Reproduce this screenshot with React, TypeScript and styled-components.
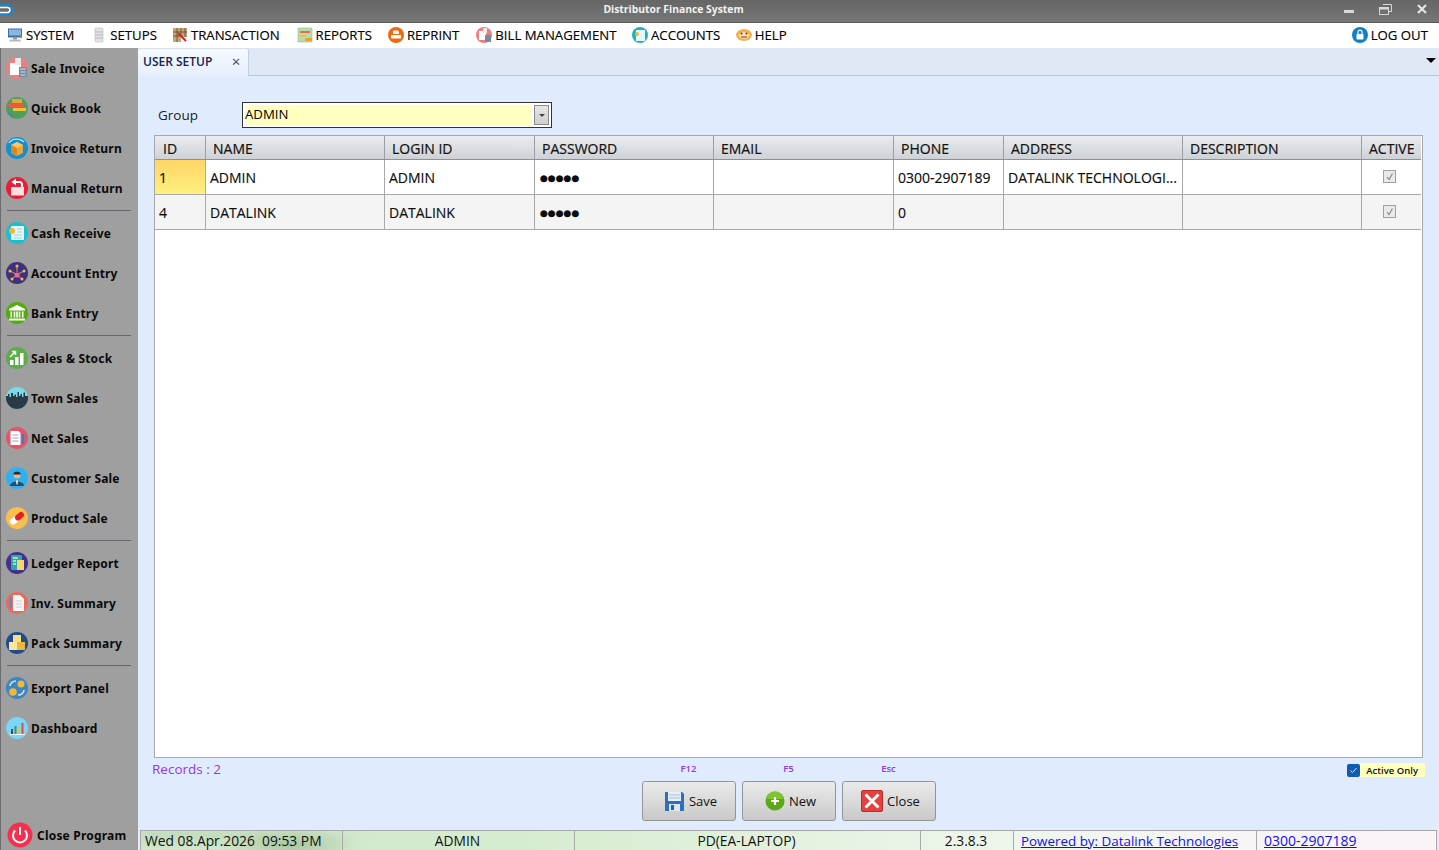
import { ReactNode } from "react";
import styled, { createGlobalStyle } from "styled-components";

const UI_FONT = `"Open Sans", "Noto Sans", "Liberation Sans", sans-serif`;

const GlobalStyle = createGlobalStyle`
  html, body {
    margin: 0;
    padding: 0;
    height: 100%;
    overflow: hidden;
    background: #e0ecfd;
  }
  #root { height: 100%; }
  * { box-sizing: border-box; }
`;

const Page = styled.div`
  width: 1439px;
  height: 850px;
  display: flex;
  flex-direction: column;
  overflow: hidden;
  font-family: ${UI_FONT};
  color: #000;
`;

const TitleBar = styled.div`
  height: 23px;
  flex: none;
  display: flex;
  align-items: center;
  background: linear-gradient(#666 0%, #767676 100%);
  border-bottom: 1px solid #5a5a5a;
`;

const TitleLogo = styled.svg`
  flex: none;
  margin-bottom: 3px;
`;

const TitleText = styled.div`
  flex: 1;
  text-align: center;
  padding-right: 13px;
  font-size: 10.35px;
  font-weight: 700;
  color: #f2f2f2;
  margin-bottom: 4px;
`;

const WindowButtons = styled.div`
  display: flex;
  align-items: center;
  gap: 25px;
  padding-right: 12px;
  margin-bottom: 4px;
`;

const MenuBar = styled.div`
  height: 25px;
  flex: none;
  display: flex;
  align-items: center;
  background: #fff;
  padding: 0 11px 2px 7px;
`;

const MenuItem = styled.div<{ $gap: number }>`
  display: flex;
  align-items: center;
  gap: 3px;
  font-size: 13.2px;
  -webkit-text-stroke: 0.15px #000;
  margin-right: ${({ $gap }) => $gap}px;
  white-space: nowrap;
`;

const MenuSpacer = styled.div`
  flex: 1;
`;

const Body = styled.div`
  flex: 1;
  min-height: 0;
  display: flex;
`;

const Sidebar = styled.aside`
  width: 138px;
  flex: none;
  display: flex;
  flex-direction: column;
  background: #9f9f9f;
  border-left: 1px solid #6c6c70;
`;

const SideItem = styled.div`
  height: 40px;
  flex: none;
  display: flex;
  align-items: center;
  gap: 2px;
  padding-left: 4px;
  font-family: "Noto Sans", "DejaVu Sans", sans-serif;
  font-size: 12px;
  font-weight: 700;
  letter-spacing: 0.2px;
  color: #0a0a0a;
  white-space: nowrap;
`;

const SideDivider = styled.div`
  height: 5px;
  flex: none;
  padding: 2px 7px 2px 6px;

  &::before {
    content: "";
    display: block;
    height: 1px;
    background: #66666a;
  }
`;

const SideFill = styled.div`
  flex: 1;
`;

const SideClose = styled(SideItem)`
  height: 30px;
  gap: 4px;
  padding-left: 6px;
`;

const DiscSvg = styled.svg`
  flex: none;
`;

const Main = styled.main`
  flex: 1;
  min-width: 0;
  display: flex;
  flex-direction: column;
  background: #e0ecfd;
`;

const TabStrip = styled.div`
  height: 28px;
  flex: none;
  display: flex;
  align-items: flex-end;
  justify-content: space-between;
  background: #dfe8f5;
  border-bottom: 1px solid #b9c6da;
`;

const Tab = styled.div`
  width: 111px;
  height: 28px;
  margin-bottom: -1px;
  display: flex;
  align-items: center;
  justify-content: space-between;
  padding: 0 4px 3px 5px;
  background: linear-gradient(#f6f9fe, #e6effd);
  border-right: 1px solid #c2cfe2;
  border-top: 1px solid #d5dfee;
  border-radius: 3px 3px 0 0;
  font-size: 12px;
  font-weight: 600;
  color: #12224f;
`;

const TabClose = styled.span`
  width: 16px;
  text-align: center;
  font-size: 15px;
  line-height: 15px;
  font-weight: 400;
  color: #33476f;
`;

const TabArrow = styled.span`
  width: 0;
  height: 0;
  margin: 0 3px 12px 0;
  border-left: 5px solid transparent;
  border-right: 5px solid transparent;
  border-top: 5px solid #000;
`;

const Content = styled.div`
  flex: 1;
  min-height: 0;
  display: flex;
  flex-direction: column;
  padding: 26px 16px 0;
`;

const GroupRow = styled.div`
  height: 26px;
  flex: none;
  display: flex;
  align-items: center;
  padding-left: 4px;
  font-size: 13.5px;
  color: #1c1c1c;
`;

const GroupLabel = styled.span`
  width: 84px;
`;

const Combo = styled.div`
  width: 310px;
  height: 26px;
  display: flex;
  align-items: stretch;
  gap: 2px;
  padding: 2px;
  background: #fff;
  border: 1px solid #333;
`;

const ComboValue = styled.div`
  flex: 1;
  display: flex;
  align-items: center;
  padding: 0 0 2px 0;
  background: #ffffc0;
  font-size: 13.2px;
  color: #000;
`;

const ComboButton = styled.div`
  width: 15px;
  display: flex;
  align-items: center;
  justify-content: center;
  background: linear-gradient(#e6e6e6, #cfcfcf);
  border: 1px solid #8a8a8a;

  &::after {
    content: "";
    border-left: 3px solid transparent;
    border-right: 3px solid transparent;
    border-top: 3px solid #444;
  }
`;

const Grid = styled.div`
  flex: 1;
  min-height: 0;
  margin-top: 7px;
  background: #fff;
  border: 1px solid #a6a8ac;
  padding-right: 1px;
`;

const Row = styled.div<{ $alt?: boolean }>`
  display: grid;
  grid-template-columns: 51px 179px 150px 179px 180px 110px 179px 179px 59px;
  height: 35px;
  background: ${({ $alt }) => ($alt ? "#f4f4f4" : "#fff")};
  border-bottom: 1px solid #a9a9a9;
`;

const HeadRow = styled(Row)`
  height: 24px;
  background: linear-gradient(#eaecef, #ced2d7);
  border-bottom: 1px solid #8f9196;
`;

const HeadCell = styled.div`
  display: flex;
  align-items: flex-end;
  padding: 0 0 1px 7px;
  border-right: 1px solid #9c9ea3;
  font-size: 14px;
  font-weight: 500;
  -webkit-text-stroke: 0.2px #14110c;
  color: #14110c;
  white-space: nowrap;

  &:first-child {
    padding-left: 8px;
  }

  &:last-child {
    border-right: 0;
  }
`;

const Cell = styled.div<{ $current?: boolean }>`
  display: flex;
  align-items: center;
  padding-left: 4px;
  border-right: 1px solid #a9a9a9;
  font-size: 14px;
  font-weight: 500;
  -webkit-text-stroke: 0.15px #0c0c0c;
  color: #0c0c0c;
  white-space: nowrap;
  overflow: hidden;
  background: ${({ $current }) =>
    $current ? "linear-gradient(#ffd566, #fff080)" : "transparent"};

  &:last-child {
    border-right: 0;
    justify-content: center;
    padding: 0 4px 1px 0;
  }
`;

const Bullets = styled.span`
  font-family: "DejaVu Sans", sans-serif;
  font-size: 9px;
  padding: 2px 0 0 1px;
`;

const Tick = styled.span`
  width: 13px;
  height: 13px;
  display: flex;
  border: 1px solid #a0a0a0;
  background: #e9e9e9;
`;

const Footer = styled.div`
  height: 70px;
  flex: none;
  display: grid;
  grid-template-columns: 1fr auto 1fr;
  padding: 2px 0 0;
  margin-right: -2px;
`;

const Records = styled.div`
  font-size: 13.5px;
  font-weight: 500;
  line-height: 17px;
  color: #9337e6;
  margin: 1px 0 0 -2px;
`;

const ButtonBar = styled.div`
  display: flex;
  gap: 6px;
  margin-left: -2px;
`;

const ButtonSlot = styled.div`
  width: 94px;
  display: flex;
  flex-direction: column;
  align-items: center;
`;

const Hotkey = styled.div`
  height: 21px;
  padding-top: 2px;
  font-size: 9.5px;
  font-weight: 600;
  color: #9337e6;
`;

const Button = styled.div`
  width: 94px;
  height: 40px;
  display: flex;
  align-items: center;
  justify-content: center;
  gap: 4px;
  padding-left: 4px;
  background: linear-gradient(#ebebeb, #c9c9c9);
  border: 1px solid #959595;
  border-radius: 3px;
  font-size: 13px;
  color: #111;
`;

const ActiveSlot = styled.div`
  justify-self: end;
  height: 14px;
  margin-top: 3px;
  display: flex;
  align-items: center;
  gap: 6px;
  padding-right: 7px;
  background: linear-gradient(to right, transparent 0 12px, #ffffc0 12px);
  font-size: 9.5px;
  font-weight: 600;
  color: #111;
`;

const ActiveBox = styled.span`
  width: 13px;
  height: 13px;
  display: flex;
  border-radius: 2px;
  background: #0f5cb4;
`;

const StatusBar = styled.div`
  height: 20px;
  flex: none;
  margin: 2px 2px 0 2px;
  display: grid;
  grid-template-columns: 202px 232px 346px 93px 243px 1fr;
  border: 1px solid #a8a8a8;
  border-bottom: 0;
  background:
    radial-gradient(ellipse 70px 18px at 150px 14px, #a9c6a2, transparent),
    radial-gradient(ellipse 200px 14px at 40px 4px, #c3dcbc, transparent),
    linear-gradient(to right, #cfe6cb 0%, #d6ecd0 30%, #e6f3e2 55%, #f0f6ef 70%, #f8f4f6 85%, #faf3f8 100%);
  font-size: 13.8px;
  line-height: 20px;
  color: #111;
  overflow: hidden;
`;

const StatusCell = styled.div<{ $inset?: number }>`
  padding: ${({ $inset }) => ($inset ? `0 0 0 ${$inset}px` : "0 2px 0 0")};
  text-align: ${({ $inset }) => ($inset ? "left" : "center")};
  border-right: 1px solid #a8a8a8;
  white-space: pre;

  &:last-child {
    border-right: 0;
  }
`;

const StatusLink = styled.span<{ $size: number }>`
  font-size: ${({ $size }) => $size}px;
  color: #1010ee;
  text-decoration: underline;
`;

// round sidebar icon, 24px box with a coloured disc
const Disc = ({ bg, children }: { bg: string; children: ReactNode }) => (
  <DiscSvg width="24" height="24" viewBox="0 0 24 24">
    <circle cx="12" cy="12" r="11" fill={bg} />
    {children}
  </DiscSvg>
);

const Glyph = ({ children }: { children: ReactNode }) => (
  <DiscSvg width="16" height="16" viewBox="0 0 16 16">
    {children}
  </DiscSvg>
);

const sideIcons: Record<string, ReactNode> = {
  "Sale Invoice": (
    <Disc bg="#ee7f80">
      <path d="M5 7h9l2 2v10H5z" fill="#fff" />
      <path d="M10 2h6v7h-6z" fill="#e9e9e9" />
      <rect x="14" y="11" width="8" height="10" fill="#7b8aa0" />
      <path d="M15 13h6M15.5 16h5M15.5 19h5" stroke="#d5dde6" strokeWidth="1.2" />
    </Disc>
  ),
  "Quick Book": (
    <Disc bg="#4f9f5b">
      <path d="M7 3h10v4H7z" fill="#e6a437" />
      <path d="M3 8h15v3H3z" fill="#ea5a4b" />
      <path d="M8 12h13v3H8z" fill="#f0c33c" />
      <path d="M2 15a10 10 0 0 0 8 6z" fill="#3f7fc0" />
    </Disc>
  ),
  "Invoice Return": (
    <Disc bg="#0f8fd6">
      <path d="M6 9l6-3 6 3v8l-6 3-6-3z" fill="#eda537" />
      <path d="M6 9l6 3 6-3-6-3z" fill="#f7c768" />
      <path d="M12 12v8l-6-3V9z" fill="#d88a20" />
      <path d="M4 7c3-5 11-5 15-1" stroke="#bfe6fa" strokeWidth="1.3" fill="none" />
    </Disc>
  ),
  "Manual Return": (
    <Disc bg="#e51f36">
      <rect x="6" y="11" width="13" height="8.5" rx="0.5" fill="#fbdfe2" />
      <path d="M17 11V8.5a2.5 2.5 0 0 0-2.5-2.5H10" stroke="#fff" strokeWidth="2.2" fill="none" />
      <path d="M11 2.5L6.5 6l4.5 3.5z" fill="#fff" />
    </Disc>
  ),
  "Cash Receive": (
    <Disc bg="#19bfcf">
      <rect x="6" y="5" width="13" height="14" rx="1" fill="#e5f6f8" />
      <path d="M12 8h5M12 11h5M9 14h8M9 17h8" stroke="#a9cfd8" strokeWidth="1" />
      <circle cx="7" cy="10" r="3" fill="#f2b63b" />
    </Disc>
  ),
  "Account Entry": (
    <Disc bg="#3f2f80">
      <circle cx="12" cy="14" r="2.6" fill="#ea6a8c" />
      <path d="M12 5v6M5 10l5 2.5M19 10l-5 2.5M7 18l3-2.5M17 18l-3-2.5" stroke="#f0c040" strokeWidth="0.8" />
      <circle cx="12" cy="5" r="1.5" fill="#f0c040" />
      <circle cx="5" cy="10" r="1.5" fill="#f0c040" />
      <circle cx="19" cy="10" r="1.5" fill="#f0c040" />
      <circle cx="7" cy="18" r="1.5" fill="#f0c040" />
      <circle cx="17" cy="18" r="1.5" fill="#f0c040" />
    </Disc>
  ),
  "Bank Entry": (
    <Disc bg="#53ac0c">
      <path d="M12 4l8 4v1.5H4V8z" fill="#fff" />
      <path d="M5.5 10.5h1.6v6H5.5zM8.7 10.5h1.6v6H8.7zM13.7 10.5h1.6v6h-1.6zM16.9 10.5h1.6v6h-1.6zM11.2 10.5h1.6v6h-1.6z" fill="#fff" />
      <path d="M4 17.5h16v2H4z" fill="#fff" />
    </Disc>
  ),
  "Sales & Stock": (
    <Disc bg="#5fac4a">
      <rect x="5" y="14" width="3.5" height="5" fill="#fff" />
      <rect x="10" y="11" width="3.5" height="8" fill="#fff" />
      <rect x="15" y="7" width="3.5" height="12" fill="#fff" />
      <path d="M5 11l5-5M7 5.5h3.5V9" stroke="#fff" strokeWidth="1.5" fill="none" />
    </Disc>
  ),
  "Town Sales": (
    <Disc bg="#78dbe9">
      <path d="M1 12V10h2V8h1.5v3H6V7h2v3h1.5V8.5H11V11h1.5V6H14v4h1.5V8H17v3h1.5V6.5H20V10h3v2a11 11 0 0 1-22 0z" fill="#2b3a47" />
    </Disc>
  ),
  "Net Sales": (
    <Disc bg="#e4556c">
      <path d="M5.5 5h8l2 2v12h-10z" fill="#fff" />
      <path d="M7.5 9h6M7.5 12h6M7.5 15h6" stroke="#8fa8c4" strokeWidth="1" />
      <rect x="17" y="8" width="2.2" height="10" fill="#3d7ec0" />
    </Disc>
  ),
  "Customer Sale": (
    <Disc bg="#2fb0f2">
      <circle cx="12" cy="9" r="3.6" fill="#e9b48a" />
      <path d="M8.2 8.5c0-4 7.6-4 7.6 0z" fill="#2b2b2b" />
      <path d="M5 20c0-6 14-6 14 0z" fill="#34495e" />
      <path d="M11 14.5h2l-.5 4h-1z" fill="#fff" />
    </Disc>
  ),
  "Product Sale": (
    <Disc bg="#f9bf4f">
      <path d="M8 15.5l4-3" stroke="#fff" strokeWidth="6" strokeLinecap="round" />
      <path d="M13 11.5l3-2.5" stroke="#e81e25" strokeWidth="6" strokeLinecap="round" />
    </Disc>
  ),
  "Ledger Report": (
    <Disc bg="#46318a">
      <rect x="6" y="4" width="11" height="15" rx="1" fill="#29a6b8" />
      <rect x="12" y="9" width="7" height="10" fill="#f5d76e" />
      <path d="M8 7h5M8 10h3M8 13h3" stroke="#e8f27a" strokeWidth="1.3" />
    </Disc>
  ),
  "Inv. Summary": (
    <Disc bg="#ea6a5e">
      <path d="M8 4h7l4 4v12H8z" fill="#f6f6f6" />
      <path d="M10.5 10h6.5M10.5 13h6.5M10.5 16h6.5" stroke="#cfcfcf" strokeWidth="1" />
      <rect x="4.5" y="7" width="2.2" height="10" fill="#4c8fd0" />
    </Disc>
  ),
  "Pack Summary": (
    <Disc bg="#234a8b">
      <path d="M8 4h8v7H8z" fill="#f7de8a" />
      <path d="M4 11h8v8H4z" fill="#fbe79c" />
      <path d="M12 11h8v8h-8z" fill="#e9b83d" />
    </Disc>
  ),
  "Export Panel": (
    <Disc bg="#3e86c0">
      <circle cx="16" cy="8" r="3.5" fill="#f1b93c" />
      <circle cx="8" cy="16" r="3.8" fill="#f1b93c" />
      <path d="M5 10c0-3 3-5 6-5M19 14c0 3-3 5-6 5" stroke="#cfe4f3" strokeWidth="1.6" fill="none" />
    </Disc>
  ),
  Dashboard: (
    <Disc bg="#7cd4f6">
      <rect x="6" y="13" width="2" height="5" fill="#3d4f66" />
      <rect x="9.5" y="10" width="2" height="8" fill="#2f9a80" />
      <rect x="13" y="12" width="2" height="6" fill="#f0c040" />
      <rect x="16.5" y="7" width="2" height="11" fill="#e24c4c" />
      <path d="M5 18.5h15" stroke="#f4f7fa" strokeWidth="1" />
    </Disc>
  ),
};

const sideGroups = [
  ["Sale Invoice", "Quick Book", "Invoice Return", "Manual Return"],
  ["Cash Receive", "Account Entry", "Bank Entry"],
  ["Sales & Stock", "Town Sales", "Net Sales", "Customer Sale", "Product Sale"],
  ["Ledger Report", "Inv. Summary", "Pack Summary"],
  ["Export Panel", "Dashboard"],
];

const menuItems: { label: string; gap: number; icon: ReactNode }[] = [
  {
    label: "SYSTEM",
    gap: 17,
    icon: (
      <Glyph>
        <rect x="1" y="1.5" width="14" height="9" fill="#3b6ea8" />
        <rect x="2" y="2.5" width="12" height="6" fill="#8ab7e0" />
        <path d="M6 10.5h4v2H6z" fill="#8d9398" />
        <path d="M3 12.5h10l1 2H2z" fill="#b4b8bc" />
        <circle cx="14" cy="10" r="1.2" fill="#54b848" />
      </Glyph>
    ),
  },
  {
    label: "SETUPS",
    gap: 15,
    icon: (
      <Glyph>
        <rect x="4" y="1" width="8" height="14" rx="1" fill="#e4e4e4" stroke="#bdbdbd" strokeWidth="0.6" />
        <path d="M4 5h8M4 8h8M4 11h8" stroke="#aaa" strokeWidth="0.8" />
      </Glyph>
    ),
  },
  {
    label: "TRANSACTION",
    gap: 17,
    icon: (
      <Glyph>
        <path d="M1 1h14v9H9v5H1z" fill="#c0a878" />
        <path d="M1 5h14M1 9h8M5 1v14M9 1v9M13 1v9" stroke="#5c4a2f" strokeWidth="0.8" />
        <path d="M6 6l8 8" stroke="#d2232a" strokeWidth="2" />
      </Glyph>
    ),
  },
  {
    label: "REPORTS",
    gap: 16,
    icon: (
      <Glyph>
        <rect x="1" y="1" width="14" height="14" fill="#bdd9b0" stroke="#9fb894" strokeWidth="0.6" />
        <path d="M3 4h10v2H3z" fill="#e56f3e" />
        <path d="M3 8h6v2H3z" fill="#e7c43e" />
        <path d="M8 11h7v3H8z" fill="#e8a52f" />
      </Glyph>
    ),
  },
  {
    label: "REPRINT",
    gap: 17,
    icon: (
      <Glyph>
        <circle cx="8" cy="8" r="8" fill="#f0690f" />
        <path d="M5 3.5h5l1 1.5v2H5z" fill="#fff" />
        <path d="M3 8h10v3.5H3z" fill="#fff" />
      </Glyph>
    ),
  },
  {
    label: "BILL MANAGEMENT",
    gap: 15.5,
    icon: (
      <Glyph>
        <circle cx="8" cy="8" r="8" fill="#ee7f80" />
        <path d="M3 4h7v9H3z" fill="#fff" />
        <path d="M7 1h4v5H7z" fill="#ececec" />
        <rect x="9" y="8" width="6" height="7" fill="#7b8aa0" />
      </Glyph>
    ),
  },
  {
    label: "ACCOUNTS",
    gap: 15.5,
    icon: (
      <Glyph>
        <circle cx="8" cy="8" r="8" fill="#19b4c4" />
        <rect x="4" y="3" width="9" height="11" fill="#e5f6f8" />
        <circle cx="5" cy="7" r="2" fill="#f2b63b" />
      </Glyph>
    ),
  },
  {
    label: "HELP",
    gap: 0,
    icon: (
      <Glyph>
        <ellipse cx="8" cy="8" rx="8" ry="6" fill="#f0b34a" />
        <ellipse cx="8" cy="8.5" rx="5" ry="3.5" fill="#f6dfae" />
        <path d="M5 10h6" stroke="#c55a4a" strokeWidth="1.4" />
        <circle cx="5.5" cy="6.5" r="1" fill="#6b3d1c" />
        <circle cx="10.5" cy="6.5" r="1" fill="#6b3d1c" />
      </Glyph>
    ),
  },
];

const columns = ["ID", "NAME", "LOGIN ID", "PASSWORD", "EMAIL", "PHONE", "ADDRESS", "DESCRIPTION", "ACTIVE"];

const users = [
  { id: "1", name: "ADMIN", login: "ADMIN", phone: "0300-2907189", address: "DATALINK TECHNOLOGI..." },
  { id: "4", name: "DATALINK", login: "DATALINK", phone: "0", address: "" },
];

const TickMark = () => (
  <Tick>
    <svg width="11" height="11" viewBox="0 0 11 11">
      <path d="M3 6l2 2.5L8.5 2.5" stroke="#8a8a8a" strokeWidth="1.2" fill="none" />
    </svg>
  </Tick>
);

const App = () => {
  return (
    <Page>
      <GlobalStyle />
      <TitleBar>
        <TitleLogo width="16" height="12" viewBox="0 0 16 12">
          <path d="M-2 1.3h10a4.7 4.7 0 0 1 0 9.4H-2" fill="none" stroke="#1f86c8" strokeWidth="2.4" />
          <path d="M-2 3.6h9.5a2.4 2.4 0 0 1 0 4.8H-2" fill="none" stroke="#fff" strokeWidth="1.5" />
        </TitleLogo>
        <TitleText>Distributor Finance System</TitleText>
        <WindowButtons>
          <svg width="10" height="10" viewBox="0 0 10 10">
            <rect x="0" y="6" width="10" height="3" fill="#d8d8d8" />
          </svg>
          <svg width="13" height="11" viewBox="0 0 13 11">
            <path d="M4 .5h8.5v7H10" fill="none" stroke="#d8d8d8" />
            <rect x="0.5" y="3.5" width="9" height="7" fill="#707070" stroke="#d8d8d8" />
            <rect x="0.5" y="3.5" width="9" height="2" fill="#d8d8d8" />
          </svg>
          <svg width="10" height="10" viewBox="0 0 10 10">
            <path d="M1 1l8 8M9 1l-8 8" stroke="#e4e4e4" strokeWidth="2.2" />
          </svg>
        </WindowButtons>
      </TitleBar>

      <MenuBar>
        {menuItems.map((item) => (
          <MenuItem key={item.label} $gap={item.gap}>
            {item.icon}
            {item.label}
          </MenuItem>
        ))}
        <MenuSpacer />
        <MenuItem $gap={0}>
          <Glyph>
            <circle cx="8" cy="8" r="8" fill="#0c82c4" />
            <rect x="4.5" y="7" width="7" height="5.5" rx="0.8" fill="#fff" />
            <path d="M6 7V5.2a2 2 0 0 1 4 0V7" fill="none" stroke="#fff" strokeWidth="1.2" />
          </Glyph>
          LOG OUT
        </MenuItem>
      </MenuBar>

      <Body>
        <Sidebar>
          {sideGroups.map((group, i) => (
            <div key={group[0]}>
              {i > 0 && <SideDivider />}
              {group.map((name) => (
                <SideItem key={name}>
                  {sideIcons[name]}
                  {name}
                </SideItem>
              ))}
            </div>
          ))}
          <SideFill />
          <SideClose>
            <DiscSvg width="26" height="26" viewBox="0 0 26 26">
              <circle cx="13" cy="13" r="12.5" fill="#f5304f" />
              <path d="M8 8.5a7 7 0 1 0 10 0" fill="none" stroke="#fff" strokeWidth="2" />
              <path d="M13 5v8" stroke="#fff" strokeWidth="2" />
            </DiscSvg>
            Close Program
          </SideClose>
        </Sidebar>

        <Main>
          <TabStrip>
            <Tab>
              USER SETUP
              <TabClose>×</TabClose>
            </Tab>
            <TabArrow />
          </TabStrip>

          <Content>
            <GroupRow>
              <GroupLabel>Group</GroupLabel>
              <Combo>
                <ComboValue>ADMIN</ComboValue>
                <ComboButton />
              </Combo>
            </GroupRow>

            <Grid>
              <HeadRow>
                {columns.map((col) => (
                  <HeadCell key={col}>{col}</HeadCell>
                ))}
              </HeadRow>
              {users.map((user, i) => (
                <Row key={user.id} $alt={i === 1}>
                  <Cell $current={i === 0}>{user.id}</Cell>
                  <Cell>{user.name}</Cell>
                  <Cell>{user.login}</Cell>
                  <Cell>
                    <Bullets>●●●●●</Bullets>
                  </Cell>
                  <Cell />
                  <Cell>{user.phone}</Cell>
                  <Cell>{user.address}</Cell>
                  <Cell />
                  <Cell>
                    <TickMark />
                  </Cell>
                </Row>
              ))}
            </Grid>

            <Footer>
              <Records>Records : 2</Records>
              <ButtonBar>
                <ButtonSlot>
                  <Hotkey>F12</Hotkey>
                  <Button>
                    <svg width="21" height="21" viewBox="0 0 21 21">
                      <path d="M1 1h17l2 2v17H1z" fill="#2a6fc0" />
                      <rect x="4" y="1" width="13" height="9" fill="#e8eef5" />
                      <path d="M5 4h11M5 7h11" stroke="#a9bfd8" strokeWidth="1" />
                      <rect x="5" y="13" width="11" height="7" fill="#dfe5ec" />
                      <rect x="7" y="14" width="3" height="5" fill="#2a5f9f" />
                    </svg>
                    Save
                  </Button>
                </ButtonSlot>
                <ButtonSlot>
                  <Hotkey>F5</Hotkey>
                  <Button>
                    <svg width="20" height="20" viewBox="0 0 20 20">
                      <circle cx="10" cy="10" r="9.5" fill="#5aa815" />
                      <path d="M2 8a8 8 0 0 1 16 0z" fill="#8fce3a" opacity="0.7" />
                      <path d="M10 6v8M6 10h8" stroke="#fff" strokeWidth="2.2" />
                    </svg>
                    New
                  </Button>
                </ButtonSlot>
                <ButtonSlot>
                  <Hotkey>Esc</Hotkey>
                  <Button>
                    <svg width="22" height="22" viewBox="0 0 22 22">
                      <rect x="0.5" y="0.5" width="21" height="21" rx="1.5" fill="#e8403e" stroke="#b92c2c" />
                      <path d="M4.5 4.5l13 13M17.5 4.5l-13 13" stroke="#fff" strokeWidth="3" />
                    </svg>
                    Close
                  </Button>
                </ButtonSlot>
              </ButtonBar>
              <ActiveSlot>
                <ActiveBox>
                  <svg width="13" height="13" viewBox="0 0 13 13">
                    <path d="M3.5 6.5l2 2 4-4.5" stroke="#cfe2f7" strokeWidth="1" fill="none" />
                  </svg>
                </ActiveBox>
                Active Only
              </ActiveSlot>
            </Footer>
          </Content>

          <StatusBar>
            <StatusCell $inset={4}>Wed 08.Apr.2026  09:53 PM</StatusCell>
            <StatusCell>ADMIN</StatusCell>
            <StatusCell>PD(EA-LAPTOP)</StatusCell>
            <StatusCell>2.3.8.3</StatusCell>
            <StatusCell $inset={7}>
              <StatusLink $size={13.4}>Powered by: Datalink Technologies</StatusLink>
            </StatusCell>
            <StatusCell $inset={7}>
              <StatusLink $size={14}>0300-2907189</StatusLink>
            </StatusCell>
          </StatusBar>
        </Main>
      </Body>
    </Page>
  );
};

export default App;
